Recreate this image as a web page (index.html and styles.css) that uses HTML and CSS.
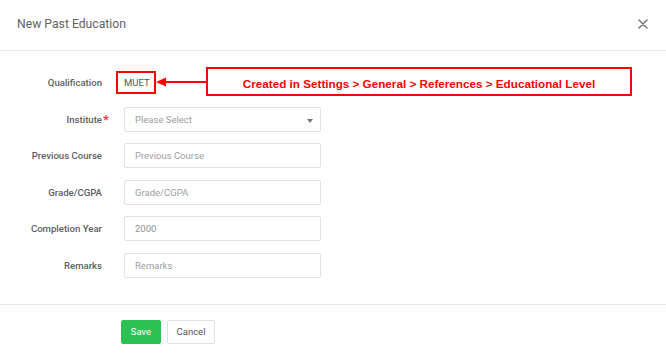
FILE: index.html
```html
<!DOCTYPE html>
<html>
<head>
<meta charset="utf-8">
<link rel="stylesheet" href="styles.css">
</head>
<body>
<div class="modal">
  <div class="modal-header">
    <span class="modal-title">New Past Education</span>
    <svg class="close" width="10" height="10" viewBox="0 0 10 10" aria-label="Close">
      <path d="M1 1 L9 9 M9 1 L1 9" stroke="#7a7a7a" stroke-width="1.6" stroke-linecap="round"/>
    </svg>
  </div>
  <div class="modal-body">
    <form class="form">
      <label class="label">Qualification</label>
      <div class="static"><span class="static-box">MUET</span></div>

      <label class="label required">Institute</label>
      <div class="select">Please Select<span class="caret"></span></div>

      <label class="label">Previous Course</label>
      <div class="input placeholder">Previous Course</div>

      <label class="label">Grade/CGPA</label>
      <div class="input placeholder">Grade/CGPA</div>

      <label class="label">Completion Year</label>
      <div class="input value">2000</div>

      <label class="label">Remarks</label>
      <div class="input placeholder">Remarks</div>
    </form>
  </div>
  <div class="modal-footer">
    <button class="btn btn-save" type="button">Save</button>
    <button class="btn btn-cancel" type="button">Cancel</button>
  </div>

  <svg class="arrow" width="52" height="12" viewBox="0 0 52 12">
    <line x1="8" y1="6" x2="52" y2="6" stroke="#f00" stroke-width="2"/>
    <polygon points="0,6 10,1.5 10,10.5" fill="#f00"/>
  </svg>
  <div class="callout">Created in Settings &gt; General &gt; References &gt; Educational Level</div>
</div>
</body>
</html>
```

FILE: styles.css
```css
* { box-sizing: border-box; }
html, body { margin: 0; padding: 0; background: #fff; }
body { font-family: Roboto, "Liberation Sans", sans-serif; }

.modal { position: relative; width: 666px; height: 355px; }

.modal-header {
  height: 51px;
  display: flex;
  align-items: center;
  justify-content: space-between;
  padding: 0 18px 2px 17px;
  border-bottom: 1px solid #e8e9ea;
}
.modal-title { font-size: 12.2px; color: #5f6366; }
.close { display: block; }

.modal-body { padding: 19px 0 26px 0; }

.form {
  display: grid;
  grid-template-columns: 102px 197px;
  column-gap: 22px;
  grid-auto-rows: 25px;
  row-gap: 11.6px;
}

.label {
  display: flex;
  align-items: center;
  justify-content: flex-end;
  font-size: 9.6px;
  font-weight: 500;
  color: #5a5f63;
  position: relative;
}
.label.required::after {
  content: "*";
  position: absolute;
  left: 103px;
  top: 5px;
  color: #e53935;
  font-size: 13px;
  font-weight: 700;
}

.static { display: flex; align-items: center; margin-left: -8px; }
.static-box {
  border: 2px solid #f00;
  padding: 4px 6px 4px 6px;
  font-size: 9.5px;
  color: #555;
  line-height: 12px;
  width: 40px;
  height: 23px;
  display: flex;
  align-items: center;
}

.input, .select {
  border: 1px solid #dfe3e4;
  border-radius: 2px;
  display: flex;
  align-items: center;
  padding-left: 10px;
  font-size: 9.5px;
  position: relative;
}
.placeholder, .select { color: #9a9fa3; }
.value { color: #8e9295; }

.caret {
  position: absolute;
  right: 7px;
  top: 11px;
  width: 0; height: 0;
  border-left: 3.5px solid transparent;
  border-right: 3.5px solid transparent;
  border-top: 4px solid #777;
}

.modal-footer {
  border-top: 1px solid #e5e6e7;
  padding: 15px 0 0 121px;
  display: flex;
  gap: 6px;
}
.btn {
  height: 24px;
  font-family: Roboto, "Liberation Sans", sans-serif;
  font-size: 9.5px;
  border-radius: 2px;
  padding: 0;
  cursor: pointer;
}
.btn-save { width: 40px; background: #2bc253; color: #fff; border: 1px solid #2bc253; }
.btn-cancel { width: 48px; background: #fff; color: #555; border: 1px solid #dfe2e3; }

.arrow { position: absolute; left: 156px; top: 76px; }

.callout {
  position: absolute;
  left: 206px;
  top: 67px;
  width: 426px;
  height: 29px;
  border: 2px solid #f00;
  background: #fff;
  color: #f00;
  font-family: "Liberation Sans", Arial, sans-serif;
  font-weight: 700;
  font-size: 11.7px;
  display: flex;
  align-items: center;
  justify-content: center;
  padding-top: 3px;
}
```
